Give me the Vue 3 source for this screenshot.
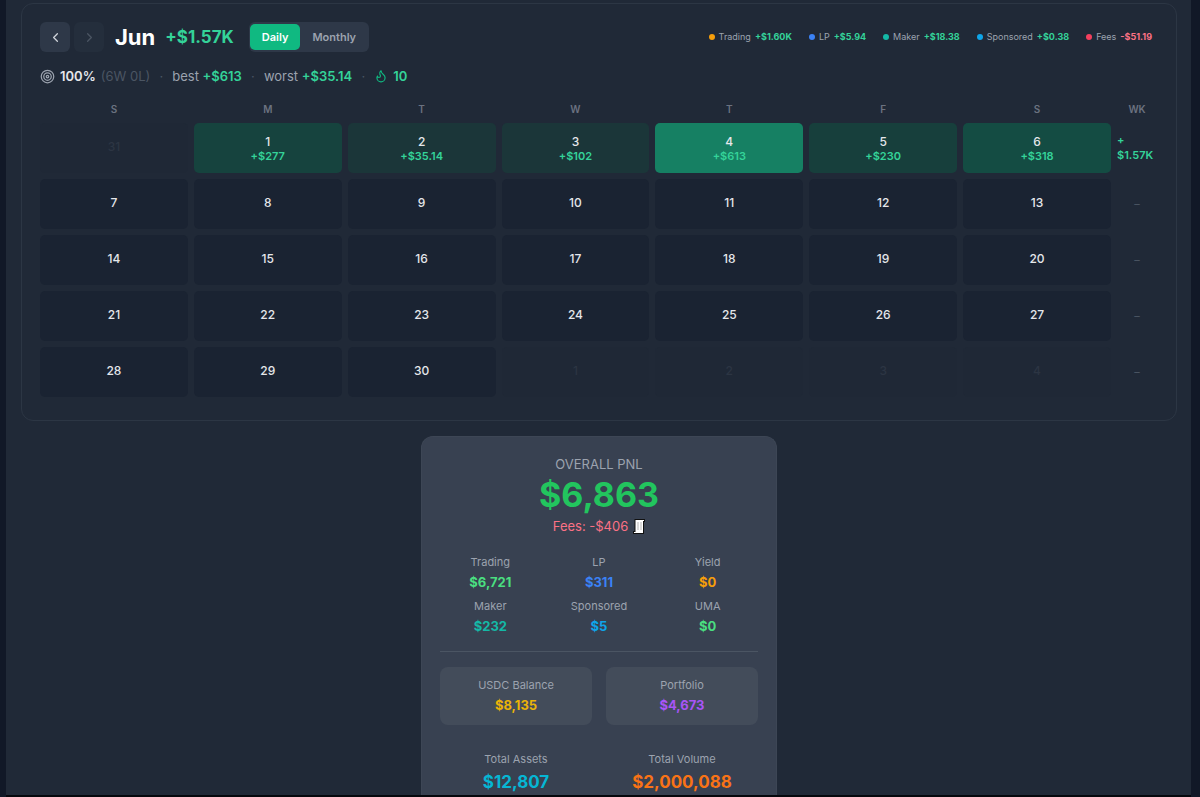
<script setup>
import { computed, ref } from 'vue';

const mode = ref('Daily');
const modes = ['Daily', 'Monthly'];

const legend = [
  { label: 'Trading', value: '+$1.60K', tone: 'amber' },
  { label: 'LP', value: '+$5.94', tone: 'blue' },
  { label: 'Maker', value: '+$18.38', tone: 'teal' },
  { label: 'Sponsored', value: '+$0.38', tone: 'sky' },
  { label: 'Fees', value: '-$51.19', tone: 'rose', negative: true },
];

const weekdays = ['S', 'M', 'T', 'W', 'T', 'F', 'S'];

const pnl = {
  1: { text: '+$277', level: 3 },
  2: { text: '+$35.14', level: 1 },
  3: { text: '+$102', level: 1 },
  4: { text: '+$613', level: 5 },
  5: { text: '+$230', level: 2 },
  6: { text: '+$318', level: 4 },
};

const weeks = computed(() => {
  const rows = [];
  for (let w = 0; w < 5; w++) {
    const days = [];
    for (let d = 0; d < 7; d++) {
      const n = w * 7 + d;
      if (n < 1) {
        days.push({ day: 31, outside: true });
      } else if (n > 30) {
        days.push({ day: n - 30, outside: true });
      } else {
        days.push({ day: n, result: pnl[n] });
      }
    }
    rows.push({ days, total: w === 0 ? '$1.57K' : '' });
  }
  return rows;
});

const breakdown = [
  { label: 'Trading', value: '$6,721', tone: 'green' },
  { label: 'LP', value: '$311', tone: 'blue' },
  { label: 'Yield', value: '$0', tone: 'amber' },
  { label: 'Maker', value: '$232', tone: 'teal' },
  { label: 'Sponsored', value: '$5', tone: 'sky' },
  { label: 'UMA', value: '$0', tone: 'green' },
];

const balances = [
  { label: 'USDC Balance', value: '$8,135', tone: 'yellow' },
  { label: 'Portfolio', value: '$4,673', tone: 'purple' },
];

const totals = [
  { label: 'Total Assets', value: '$12,807', tone: 'cyan' },
  { label: 'Total Volume', value: '$2,000,088', tone: 'orange' },
];
</script>

<template>
  <main class="dashboard">
    <section class="calendar">
      <header class="calendar__header">
        <div class="calendar__nav">
          <button type="button" class="nav-btn" aria-label="Previous month">
            <svg viewBox="0 0 24 24"><path d="m15 18-6-6 6-6" /></svg>
          </button>
          <button type="button" class="nav-btn" aria-label="Next month" disabled>
            <svg viewBox="0 0 24 24"><path d="m9 18 6-6-6-6" /></svg>
          </button>
        </div>
        <h1 class="calendar__month">Jun</h1>
        <strong class="calendar__sum">+$1.57K</strong>
        <div class="mode-switch">
          <button
            v-for="item in modes"
            :key="item"
            type="button"
            :class="['mode-switch__btn', { active: item === mode }]"
            @click="mode = item"
          >
            {{ item }}
          </button>
        </div>
        <ul class="legend">
          <li v-for="item in legend" :key="item.label" class="legend__item">
            <i :class="['legend__dot', `tone-${item.tone}`]"></i>
            <span>{{ item.label }}</span>
            <strong :class="{ negative: item.negative }">{{ item.value }}</strong>
          </li>
        </ul>
      </header>

      <div class="stats">
        <svg class="stats__icon" viewBox="0 0 24 24">
          <circle cx="12" cy="12" r="10" />
          <circle cx="12" cy="12" r="6" />
          <circle cx="12" cy="12" r="2" />
        </svg>
        <strong class="stats__rate">100%</strong>
        <span class="stats__record">(6W 0L)</span>
        <span class="stats__sep">·</span>
        <span>best <strong>+$613</strong></span>
        <span class="stats__sep">·</span>
        <span>worst <strong>+$35.14</strong></span>
        <span class="stats__sep">·</span>
        <svg class="stats__icon stats__icon--flame" viewBox="0 0 24 24">
          <path
            d="M8.5 14.5A2.5 2.5 0 0 0 11 12c0-1.38-.5-2-1-3-1.072-2.143-.224-4.054 2-6 .5 2.5 2 4.9 4 6.5 2 1.6 3 3.5 3 5.5a7 7 0 1 1-14 0c0-1.153.433-2.294 1-3a2.5 2.5 0 0 0 2.5 2.5z"
          />
        </svg>
        <strong>10</strong>
      </div>

      <div class="calendar__body">
        <table class="month">
          <thead>
            <tr>
              <th v-for="(name, i) in weekdays" :key="i" scope="col">{{ name }}</th>
              <th scope="col" class="month__wk">WK</th>
            </tr>
          </thead>
          <tbody>
            <tr v-for="(week, w) in weeks" :key="w">
              <td
                v-for="(cell, d) in week.days"
                :key="d"
                :class="[
                  'day',
                  { 'day--outside': cell.outside },
                  cell.result ? `day--traded day--level${cell.result.level}` : '',
                ]"
              >
                <span class="day__number">{{ cell.day }}</span>
                <span v-if="cell.result" class="day__pnl">{{ cell.result.text }}</span>
              </td>
              <td v-if="week.total" class="week-total">
                <span>+</span>
                <span>{{ week.total }}</span>
              </td>
              <td v-else class="week-empty">–</td>
            </tr>
          </tbody>
        </table>
      </div>
    </section>

    <section class="overall">
      <h2 class="overall__title">OVERALL PNL</h2>
      <div class="overall__value">$6,863</div>
      <div class="overall__fees">
        <span>Fees: -$406</span>
        <svg class="receipt" viewBox="0 0 12 15">
          <path class="receipt__edge" d="M1.500 0H12v3h-1v12H0v-3h1.500z" />
          <path class="receipt__paper" d="M2.500 1H11v1h-1v12H1v-1h1.500z" />
          <path class="receipt__lines" d="M4 4h2M7 4h2M4 6h2M7 6h2M4 8h2M7 8h2M4 10h2M7 10h2" />
        </svg>
      </div>

      <dl class="breakdown">
        <div v-for="item in breakdown" :key="item.label" class="metric">
          <dt>{{ item.label }}</dt>
          <dd :class="`text-${item.tone}`">{{ item.value }}</dd>
        </div>
      </dl>

      <dl class="pair">
        <div v-for="item in balances" :key="item.label" class="metric metric--box">
          <dt>{{ item.label }}</dt>
          <dd :class="`text-${item.tone}`">{{ item.value }}</dd>
        </div>
      </dl>

      <dl class="pair pair--totals">
        <div v-for="item in totals" :key="item.label" class="metric metric--large">
          <dt>{{ item.label }}</dt>
          <dd :class="`text-${item.tone}`">{{ item.value }}</dd>
        </div>
      </dl>
    </section>
  </main>
</template>

<style>
body {
  margin: 0;
  background: #111827;
}
</style>

<style scoped>
* {
  box-sizing: border-box;
}

.dashboard {
  display: flex;
  flex-direction: column;
  min-height: 100vh;
  margin: 0 9px 0 6px;
  padding: 3px 14px 0 15px;
  border-bottom: 2px solid #05070c;
  background: #202937;
  color: #9ca3af;
  font-family: Inter, "Liberation Sans", sans-serif;
}

.calendar {
  padding: 18px 18px 17px;
  border: 1px solid #2c3644;
  border-radius: 12px;
}

.calendar__header {
  display: flex;
  align-items: center;
}

.calendar__nav {
  display: flex;
  gap: 4px;
}

.nav-btn {
  display: flex;
  align-items: center;
  justify-content: center;
  width: 30px;
  height: 30px;
  padding: 0;
  border: none;
  border-radius: 6px;
  background: #2e3848;
  color: #d1d5db;
  cursor: pointer;
}

.nav-btn:disabled {
  background: #242e3c;
  color: #4b5563;
  cursor: default;
}

.nav-btn svg {
  width: 15px;
  height: 15px;
}

svg {
  fill: none;
  stroke: currentColor;
  stroke-width: 2;
  stroke-linecap: round;
  stroke-linejoin: round;
}

.calendar__month {
  margin: 0 0 0 11px;
  color: #fff;
  font-size: 22px;
  line-height: 30px;
}

.calendar__sum {
  margin-left: 10px;
  color: #34d399;
  font-size: 17px;
  line-height: 30px;
}

.mode-switch {
  display: flex;
  margin-left: 15px;
  padding: 2px 1px;
  border-radius: 6px;
  background: #2e3848;
}

.mode-switch__btn {
  height: 26px;
  padding: 0 12px;
  border: none;
  border-radius: 5px;
  background: transparent;
  color: #9ca3af;
  font-family: inherit;
  font-size: 11px;
  font-weight: 600;
  cursor: pointer;
}

.mode-switch__btn.active {
  background: #10b981;
  color: #fff;
}

.legend {
  display: flex;
  gap: 17px;
  margin: 0 6px 0 auto;
  padding: 0;
  list-style: none;
  font-size: 9px;
  line-height: 14px;
}

.legend__item {
  display: flex;
  align-items: center;
  gap: 4px;
}

.legend__item strong {
  color: #34d399;
}

.legend__item strong.negative {
  color: #fb7185;
}

.legend__dot {
  width: 6px;
  height: 6px;
  border-radius: 50%;
}

.tone-amber {
  background: #f59e0b;
}

.tone-blue {
  background: #3b82f6;
}

.tone-teal {
  background: #14b8a6;
}

.tone-sky {
  background: #0ea5e9;
}

.tone-rose {
  background: #f43f5e;
}

.stats {
  display: flex;
  align-items: center;
  gap: 5px;
  margin-top: 14px;
  font-size: 13px;
  line-height: 20px;
}

.stats strong {
  color: #34d399;
  font-weight: 600;
}

.stats .stats__rate {
  color: #e5e7eb;
}

.stats__icon {
  width: 15px;
  height: 15px;
}

.stats__icon--flame {
  width: 14px;
  height: 14px;
  color: #10b981;
}

.stats__record {
  color: #4b5563;
}

.stats__sep {
  width: 12px;
  color: #4b5563;
  text-align: center;
}

.calendar__body {
  margin: 10px -5px 0 -6px;
}

.month {
  width: 100%;
  border-spacing: 6px;
  table-layout: fixed;
}

.month th {
  height: 15px;
  padding: 0;
  color: #6b7280;
  font-size: 10px;
  font-weight: 600;
  line-height: 15px;
}

.month .month__wk {
  width: 40px;
}

.month td {
  height: 50px;
  padding: 0;
  border-radius: 5px;
  text-align: center;
}

.month .day {
  padding-bottom: 4px;
  background: #1a2332;
  color: #e5e7eb;
}

.month .day--traded {
  padding: 2px 0 0;
}

.day__number,
.day__pnl {
  display: block;
  font-size: 12px;
  font-weight: 500;
  line-height: 15px;
}

.day__pnl {
  color: #34d399;
  font-size: 11px;
  font-weight: 600;
}

.month .day--outside {
  background: #1f2836;
  color: #2c3543;
}

.month .day--level1 {
  background: #1b3639;
}

.month .day--level2 {
  background: #173f3c;
}

.month .day--level3 {
  background: #16433e;
}

.month .day--level4 {
  background: #144c43;
}

.month .day--level5 {
  background: #168063;
}

.month .week-total {
  color: #34d399;
  font-size: 11px;
  font-weight: 600;
  line-height: 15px;
  text-align: left;
}

.week-total span {
  display: block;
}

.week-empty {
  color: #4b5563;
  font-size: 11px;
}

.overall {
  flex: 1;
  width: 356px;
  max-width: 100%;
  margin: 15px auto 0;
  padding: 17px 18px 0;
  border: 1px solid #3d4655;
  border-bottom: none;
  border-radius: 12px 12px 0 0;
  background: #384151;
  text-align: center;
}

.overall__title {
  margin: 0;
  font-size: 13px;
  font-weight: 400;
  line-height: 20px;
}

.overall__value {
  color: #22c55e;
  font-size: 34px;
  font-weight: 700;
  line-height: 42px;
}

.overall__fees {
  display: flex;
  align-items: center;
  justify-content: center;
  gap: 5px;
  color: #fb7185;
  font-size: 13px;
  line-height: 20px;
}

.receipt {
  width: 12px;
  height: 15px;
}

.receipt__edge {
  fill: #111;
  stroke: none;
}

.receipt__paper {
  fill: #fff;
  stroke: none;
}

.receipt__lines {
  stroke: #b4b4b4;
  stroke-linecap: butt;
  stroke-width: 1;
}

.breakdown,
.pair {
  display: grid;
  margin: 0;
}

.breakdown {
  grid-template-columns: repeat(3, 1fr);
  gap: 4px 8px;
  padding: 17px 0 14px;
  border-bottom: 1px solid #4b5563;
}

.pair {
  grid-template-columns: 1fr 1fr;
  gap: 14px;
  padding-top: 15px;
}

.pair--totals {
  padding-top: 24px;
}

.metric dt {
  font-size: 11px;
  line-height: 18px;
}

.metric dd {
  margin: 0;
  font-size: 13px;
  font-weight: 700;
  line-height: 22px;
}

.metric--box {
  padding: 9px;
  border-radius: 8px;
  background: #434c5a;
}

.metric--large dt {
  line-height: 20px;
}

.metric--large dd {
  font-size: 17px;
  line-height: 26px;
}

.text-green {
  color: #4ade80;
}

.text-blue {
  color: #3b82f6;
}

.text-amber {
  color: #f59e0b;
}

.text-teal {
  color: #14b8a6;
}

.text-sky {
  color: #0ea5e9;
}

.text-yellow {
  color: #eab308;
}

.text-purple {
  color: #a855f7;
}

.text-cyan {
  color: #06b6d4;
}

.text-orange {
  color: #f97316;
}
</style>
